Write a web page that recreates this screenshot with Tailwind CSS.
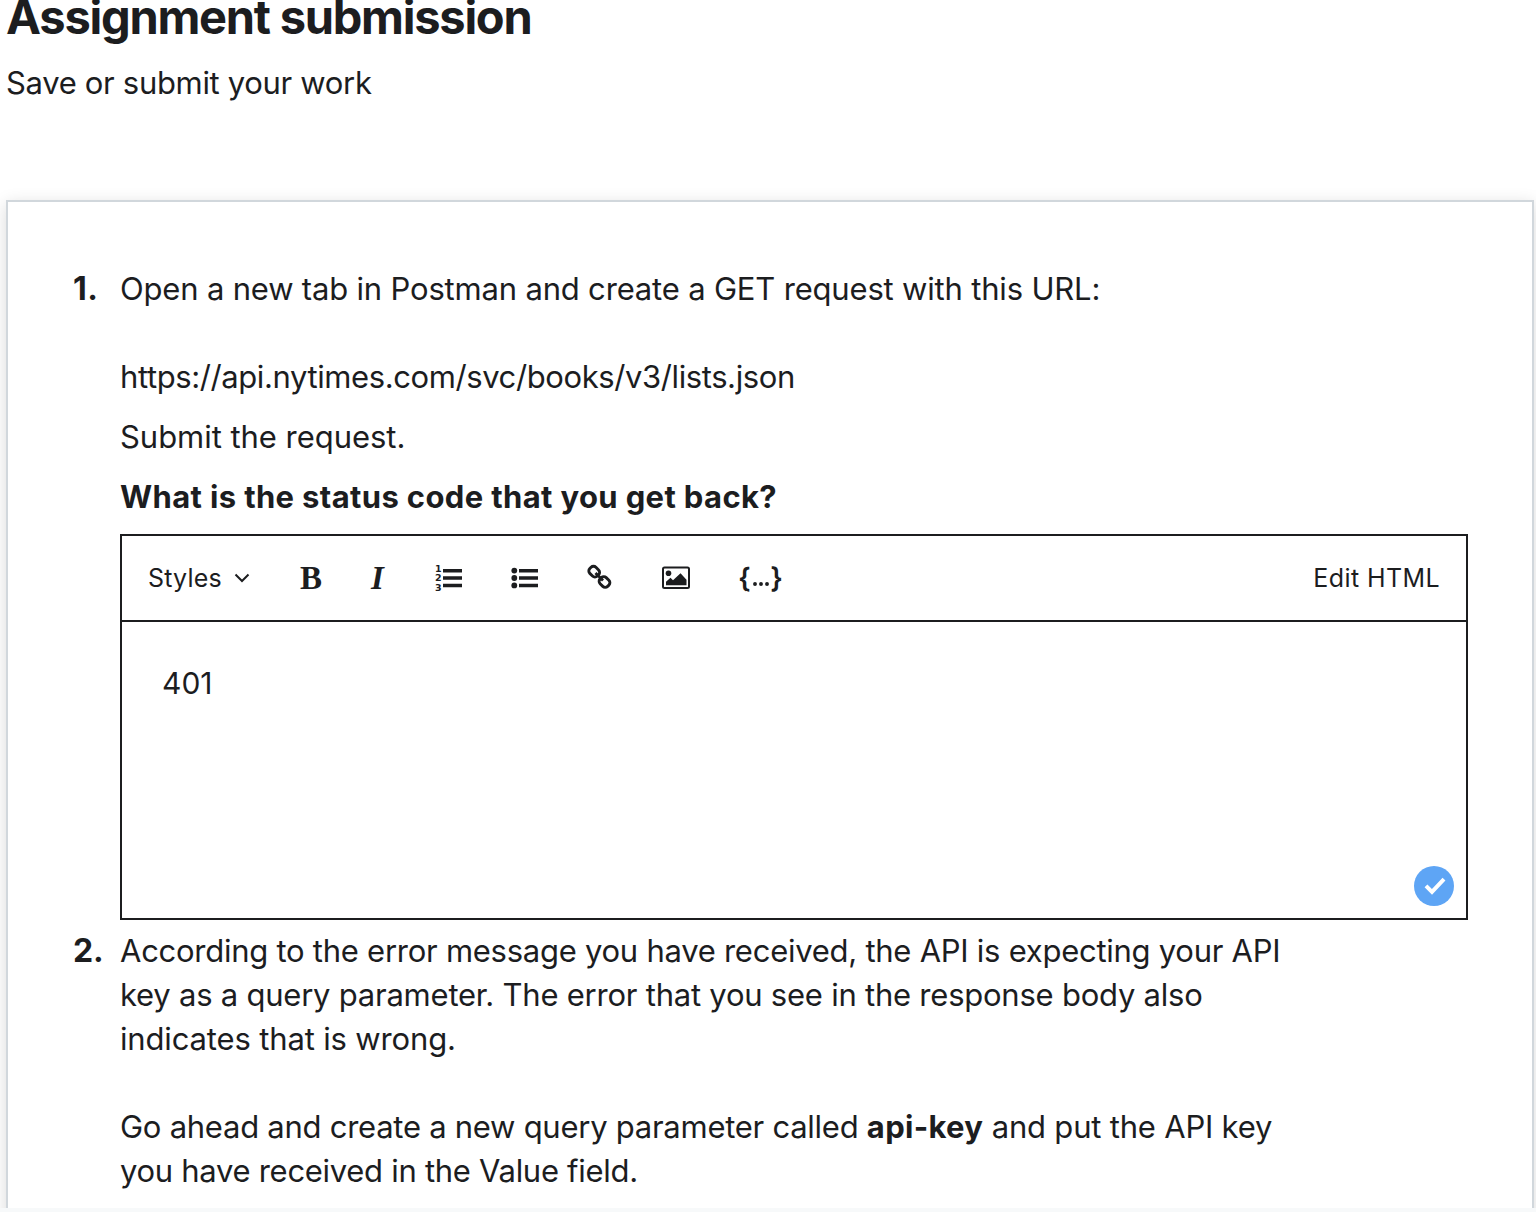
<!DOCTYPE html>
<html lang="en">
<head>
<meta charset="utf-8">
<title>Assignment submission</title>
<script src="https://cdn.jsdelivr.net/npm/@tailwindcss/browser@4"></script>
</head>
<body class="h-[1212px] overflow-hidden bg-[#f7f9fa] font-['Inter',sans-serif] text-[31px] leading-[44px] text-[#1c1d1f]">
<main class="h-[1208px] overflow-hidden bg-white pr-[2px] pl-[6px]">
  <h1 class="-mt-[13px] h-[60px] text-[47px] leading-[60px] font-bold tracking-[-1.25px]">Assignment submission</h1>
  <p class="mt-[14px] tracking-[-0.32px]">Save or submit your work</p>
  <section class="mt-[95px] h-[1040px] border-2 border-[#d1d7dc] bg-white pt-[65px] pr-16 pl-16 shadow-[0_4px_16px_rgba(0,0,0,0.15)]">
    <ol>
      <li class="flex">
        <span class="w-12 shrink-0 pl-px text-[32px] font-bold tracking-[0.5px]">1.</span>
        <div class="grow">
          <p class="tracking-[-0.18px]">Open a new tab in Postman and create a GET request with this URL:</p>
          <p class="mt-11 tracking-[-0.4px]">https://api.nytimes.com/svc/books/v3/lists.json</p>
          <p class="mt-4 tracking-[-0.04px]">Submit the request.</p>
          <p class="mt-4 font-bold tracking-[0.36px]">What is the status code that you get back?</p>
          <div class="relative mt-[15px] h-[386px] border-2 border-[#1c1d1f]">
            <div class="flex h-[86px] items-center justify-between border-b-2 border-[#1c1d1f] px-[26px] text-[25px]">
              <div class="flex items-center">
                <span class="w-[86px] tracking-[0.2px]">Styles</span>
                <svg class="h-7 w-4" viewBox="0 0 16 28" fill="none" stroke="#1c1d1f" stroke-width="2"><path d="M1.500 10.500 8 17l6.500-6.500"/></svg>
                <span class="ml-[50px] w-[71px] font-['Liberation_Serif',serif] text-[33px] font-bold">B</span>
                <span class="w-[64px] font-['Liberation_Serif',serif] text-[33px] font-bold italic">I</span>
                <svg class="h-7 w-7" viewBox="0 0 28 28" fill="#1c1d1f"><path d="M8 5h19v3.500H8zM8 12.300h19v3.500H8zM8 19.700h19v3.500H8z"/><g class="font-['DejaVu_Sans',sans-serif] text-[9.5px] font-bold"><text x="0" y="7.800">1</text><text x="0" y="17">2</text><text x="0" y="26.500">3</text></g></svg>
                <svg class="ml-12 h-7 w-7" viewBox="0 0 28 28" fill="#1c1d1f"><path d="M8 5h19v3.500H8zM8 12.300h19v3.500H8zM8 19.700h19v3.500H8z"/><circle cx="3.300" cy="6.600" r="2.900"/><circle cx="3.300" cy="14" r="2.900"/><circle cx="3.300" cy="21.400" r="2.900"/></svg>
                <svg class="ml-12 h-7 w-7" viewBox="0 0 28 28" fill="none" stroke="#1c1d1f" stroke-width="2.900"><rect x="-5.300" y="-4.300" width="10.600" height="8.600" rx="3.400" transform="translate(7.200 7.700) rotate(45)"/><rect x="-5.300" y="-4.300" width="10.600" height="8.600" rx="3.400" transform="translate(17.500 18) rotate(45)"/><path d="m8.500 9 7.500 7.500"/></svg>
                <svg class="ml-[47px] h-7 w-7" viewBox="0 0 28 28" fill="#1c1d1f"><rect x="1" y="3.500" width="26" height="20.500" rx="1.500" fill="none" stroke="#1c1d1f" stroke-width="2"/><circle cx="6.500" cy="9.200" r="2.800"/><path d="M4 21.200v-3.500l4.500-4 2.500 2.500 7.500-7 6 6.500v5.500z"/></svg>
                <span class="ml-12 flex w-[45px] items-center justify-between font-['Inter',sans-serif] text-[28px] font-semibold"><span>{</span><svg class="mt-[11px] h-1 w-4 shrink-0" viewBox="0 0 16 4" fill="#1c1d1f"><circle cx="2" cy="2" r="1.950"/><circle cx="8" cy="2" r="1.950"/><circle cx="14" cy="2" r="1.950"/></svg><span>}</span></span>
              </div>
              <span class="tracking-[0.4px]">Edit HTML</span>
            </div>
            <p class="px-10 pt-[39px] text-[30px]">401</p>
            <svg class="absolute right-3 bottom-3 h-10 w-10" viewBox="0 0 40 40"><circle cx="20" cy="20" r="20" fill="#5ea5f5"/><path d="m12 19.800 6 6L30 13.200" fill="none" stroke="#fff" stroke-width="4"/></svg>
          </div>
        </div>
      </li>
      <li class="mt-[9px] flex">
        <span class="w-12 shrink-0 pl-px text-[32px] font-bold tracking-[-0.2px]">2.</span>
        <div class="grow whitespace-nowrap">
          <p class="tracking-[-0.26px]">According to the error message you have received, the API is expecting your API</p>
          <p class="tracking-[-0.23px]">key as a query parameter. The error that you see in the response body also</p>
          <p class="tracking-[-0.15px]">indicates that is wrong.</p>
          <p class="mt-11 tracking-[-0.26px]">Go ahead and create a new query parameter called <b class="tracking-[0.3px]">api-key</b> <span class="tracking-[-0.2px]">and put the API key</span></p>
          <p class="tracking-[-0.29px]">you have received in the Value field.</p>
        </div>
      </li>
    </ol>
  </section>
</main>
</body>
</html>
